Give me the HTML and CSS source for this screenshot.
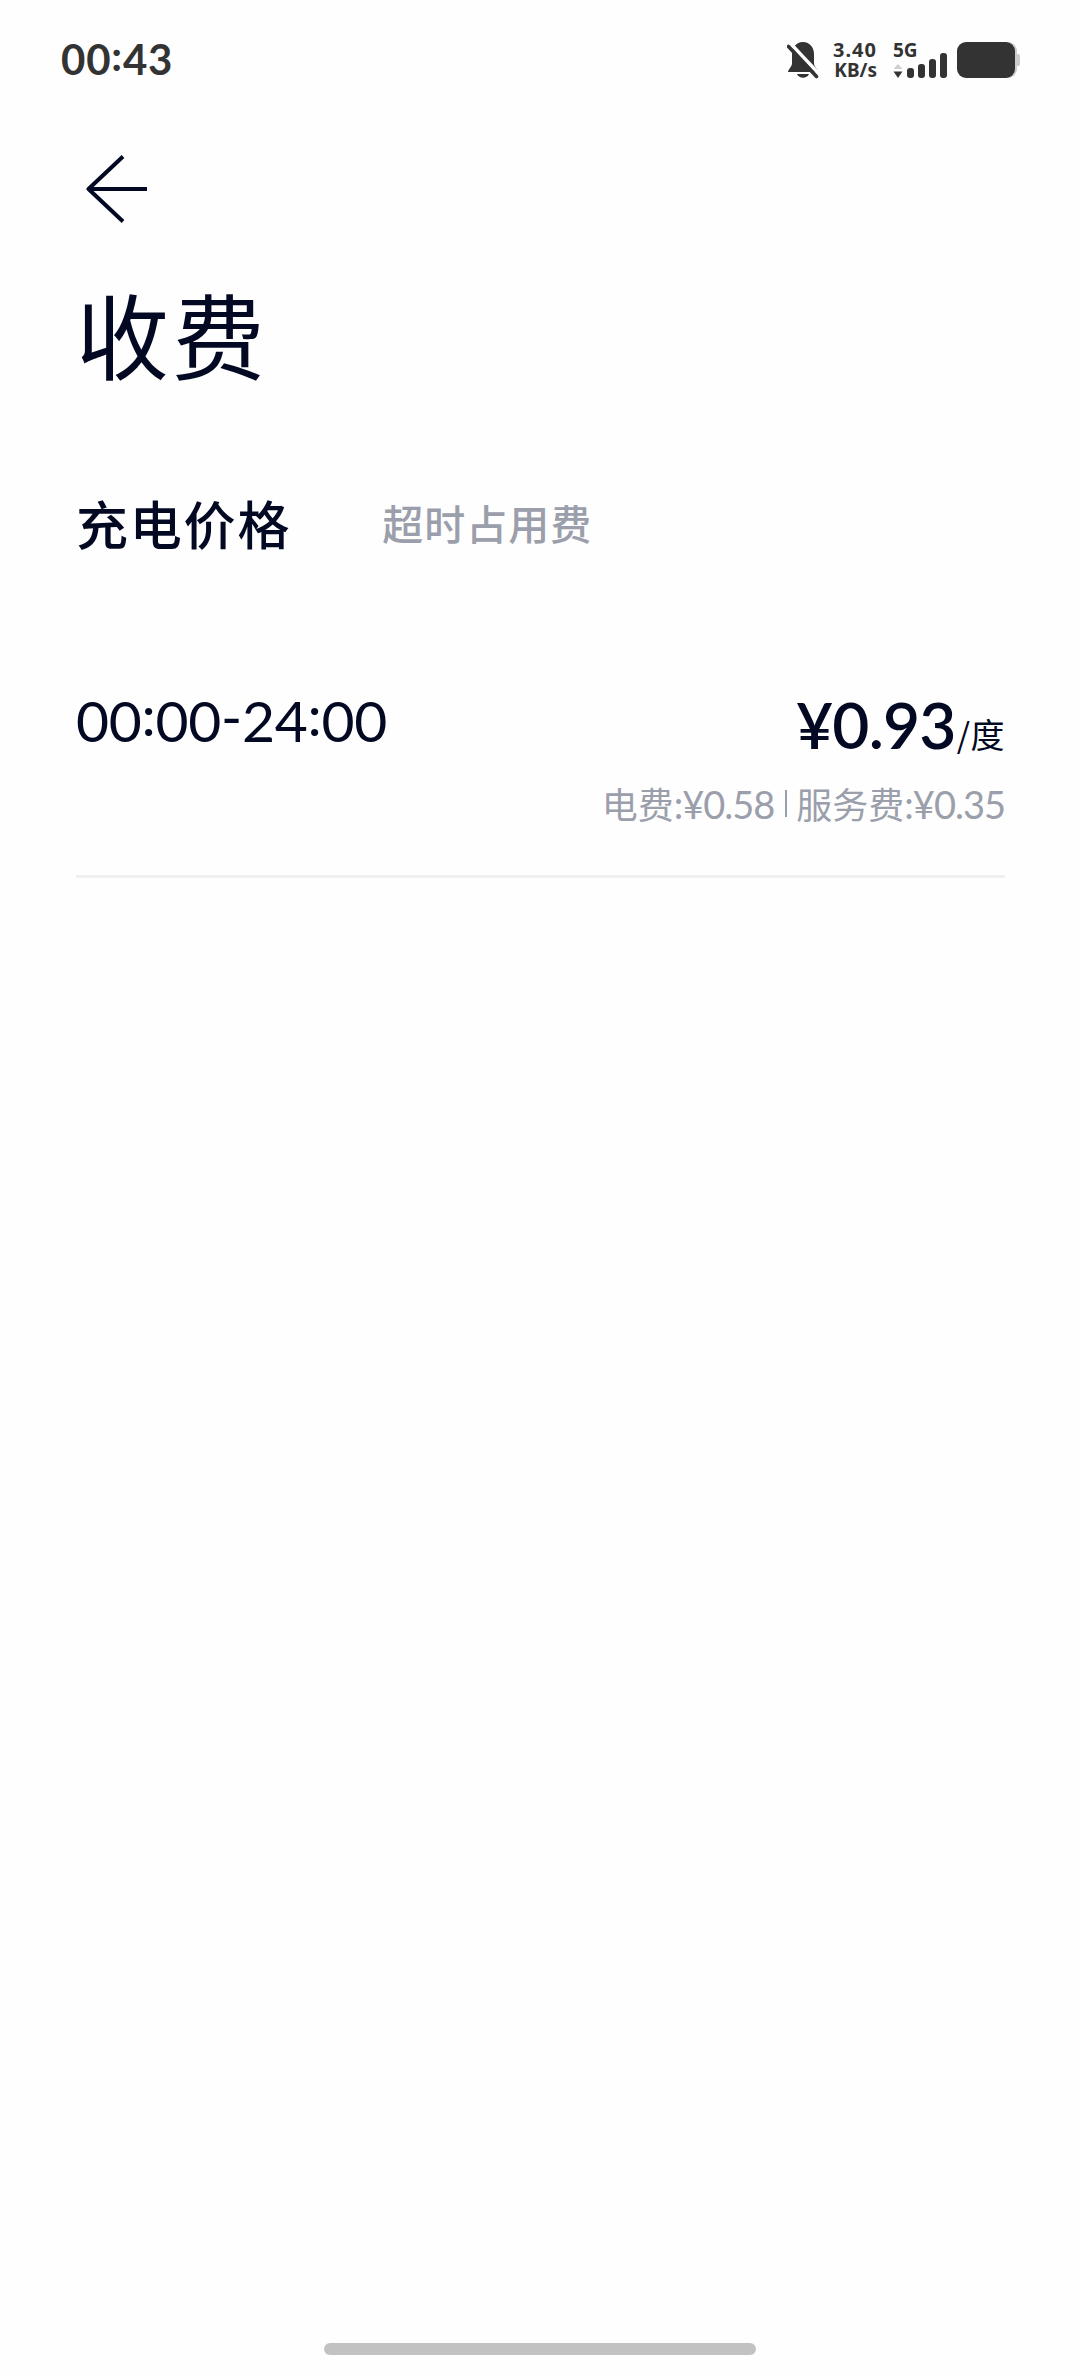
FILE: index.html
```html
<!DOCTYPE html>
<html lang="zh-CN">
<head>
    <meta charset="UTF-8">
    <meta name="viewport" content="width=device-width, initial-scale=1.0">
    <title>收费</title>
    <link rel="stylesheet" href="styles.css">
</head>
<body>
    <div class="status-bar">
        <div class="clock">00<span class="colon">:</span>43</div>
        <div class="status-icons">
            <svg class="bell" viewBox="0 0 32 38" width="32" height="38">
                <path d="M16 0C9 0 5 6 5 12v9c0 4-4 6-4 9h30c0-3-4-5-4-9v-9C27 6 23 0 16 0z" fill="#333"/>
                <path d="M10 32h12c-2 5-10 5-12 0z" fill="#333"/>
                <path d="M3 1L33 33" stroke="#fefefe" stroke-width="3.5"/>
                <path d="M1.5 4.500L29.5 34.500" stroke="#333" stroke-width="3.6" stroke-linecap="round"/>
            </svg>
            <div class="speed">
                <span class="speed-value">3.40</span>
                <span class="speed-unit">KB/s</span>
            </div>
            <div class="network">
                <span class="network-type">5G</span>
                <svg class="signal" viewBox="0 0 56 26" width="56" height="26">
                    <path d="M0.500 17L5 12l4.500 5z" fill="#d0d0d0"/>
                    <path d="M0.500 19.500h9L5 26z" fill="#333"/>
                    <rect x="14" y="16" width="7" height="10" rx="3" fill="#333"/>
                    <rect x="25" y="12" width="7" height="14" rx="3" fill="#333"/>
                    <rect x="36" y="7" width="7" height="19" rx="3" fill="#333"/>
                    <rect x="47" y="1" width="7" height="25" rx="3" fill="#333"/>
                </svg>
            </div>
            <svg class="battery" viewBox="0 0 64 36" width="64" height="36">
                <rect x="10" y="0" width="50" height="36" rx="9" fill="#ccc"/>
                <rect x="57" y="12" width="6" height="12" rx="2" fill="#ccc"/>
                <rect x="0" y="0" width="58" height="36" rx="9" fill="#333"/>
            </svg>
        </div>
    </div>

    <div class="page">
        <a class="back" href="#">
            <svg viewBox="0 0 64 72" width="64" height="72" fill="none" stroke="#030922" stroke-width="4" stroke-linejoin="round">
                <path d="M37 3.500L2.500 36 37 68.500M2.500 36H61"/>
            </svg>
        </a>

        <h1>收费</h1>

        <div class="tabs">
            <span class="tab active">充电价格</span>
            <span class="tab">超时占用费</span>
        </div>

        <div class="price-row">
            <div class="period">00<span class="colon">:</span>00<span class="dash">-</span>24<span class="colon">:</span>00</div>
            <div class="price">
                <div class="total"><span class="amount">¥0.93</span><span class="unit">/度</span></div>
                <div class="detail">
                    <span>电费<b>:¥0.58</b></span>
                    <i class="divider"></i>
                    <span>服务费<b>:¥0.35</b></span>
                </div>
            </div>
        </div>
    </div>

    <div class="home-indicator"></div>
</body>
</html>
```
FILE: styles.css
```css
* {
    box-sizing: border-box;
}
body {
    margin: 0;
    height: 2376px;
    display: flex;
    flex-direction: column;
    background: #fefefe;
    color: #030922;
    font-family: "Noto Sans CJK SC", sans-serif;
}

/* Status bar */
.status-bar {
    display: flex;
    justify-content: space-between;
    height: 120px;
    padding: 0 59px 0 61px;
    color: #333;
}
.clock,
.period,
.amount,
.detail b {
    font-family: Lato, "Noto Sans CJK SC", sans-serif;
}
.clock {
    padding-top: 34px;
    font-size: 42px;
    line-height: 50px;
    font-weight: 700;
    letter-spacing: 0.8px;
}
.colon,
.dash {
    line-height: 0;
}
.clock .colon {
    vertical-align: 4px;
}
.status-icons {
    display: flex;
    padding-top: 42px;
}
.speed {
    display: flex;
    flex-direction: column;
    align-items: flex-end;
    width: 46px;
    margin-left: 12px;
    font-family: "Noto Sans", sans-serif;
    font-weight: 700;
    white-space: nowrap;
}
.speed-value {
    font-size: 20px;
    line-height: 15px;
    letter-spacing: 1px;
}
.speed-unit {
    margin-top: 5px;
    font-size: 19px;
    line-height: 16px;
}
.network {
    display: flex;
    flex-direction: column;
    width: 56px;
    margin: 0 8px 0 16px;
}
.network-type {
    font-family: "Noto Sans", sans-serif;
    font-size: 19px;
    font-weight: 700;
    line-height: 16px;
}
.signal {
    margin-top: -6px;
}

/* Content */
.page {
    flex: 1;
    padding: 33px 75px 0 76px;
}
.back {
    display: block;
    height: 72px;
    padding-left: 10px;
}
h1 {
    margin: 38px 0 0;
    font-size: 93px;
    line-height: 140px;
    font-weight: 400;
    letter-spacing: 3px;
}
.tabs {
    display: flex;
    align-items: center;
    gap: 91px;
    height: 80px;
    margin-top: 79px;
}
.tab {
    font-size: 41px;
    font-weight: 500;
    letter-spacing: 1px;
    color: #9b9fab;
}
.tab.active {
    font-size: 52px;
    letter-spacing: 1.8px;
    color: #030922;
}
.price-row {
    display: flex;
    justify-content: space-between;
    height: 211px;
    margin-top: 105px;
    border-bottom: 3px solid #f0f0f0;
}
.period {
    padding-top: 19px;
    font-size: 57px;
    line-height: 68px;
    letter-spacing: -0.3px;
}
.period .colon {
    vertical-align: 6px;
}
.period .dash {
    vertical-align: 4px;
}
.price {
    display: flex;
    flex-direction: column;
    align-items: flex-end;
}
.total {
    padding-top: 17px;
    font-size: 62px;
    line-height: 76px;
    white-space: nowrap;
}
.amount {
    font-size: 64px;
    font-weight: 600;
    line-height: 1;
    letter-spacing: -0.8px;
}
.unit {
    margin-left: 1px;
    font-size: 34px;
    line-height: 1;
    letter-spacing: 0.5px;
    vertical-align: 1px;
}
.detail {
    display: flex;
    align-items: center;
    margin-top: 18px;
    font-size: 36px;
    line-height: 50px;
    color: #9b9fab;
    white-space: nowrap;
}
.detail b {
    font-size: 38px;
    font-weight: 400;
    line-height: 1;
    letter-spacing: -1px;
}
.divider {
    width: 2px;
    height: 27px;
    margin: 0 9px 0 11px;
    background: #9b9fab;
}

/* Gesture bar */
.home-indicator {
    width: 432px;
    height: 12px;
    margin: 0 auto 21px;
    border-radius: 6px;
    background: #c2c2c2;
}
```
